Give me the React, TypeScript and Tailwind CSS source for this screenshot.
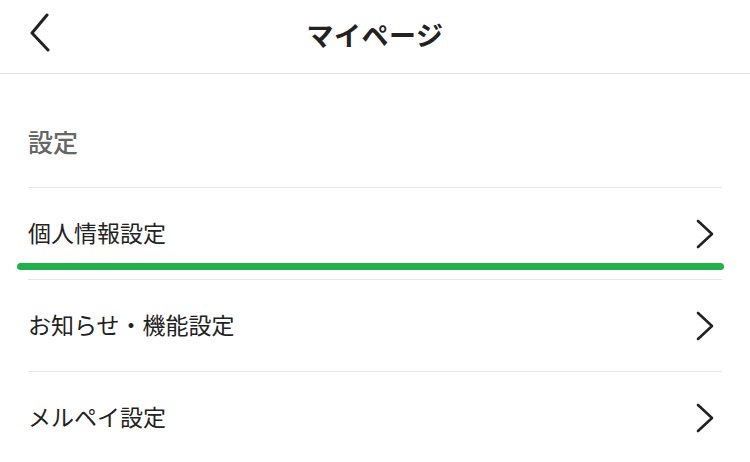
const rows = ["個人情報設定", "お知らせ・機能設定", "メルペイ設定"];

function BackArrow() {
  return (
    <svg width="24" height="40" viewBox="0 0 24 40" className="absolute left-[28px] top-[13px]" fill="none">
      <polyline points="19,2 4,20 20,37" stroke="#222" strokeWidth="3" strokeLinecap="round" strokeLinejoin="round" />
    </svg>
  );
}

function RowArrow() {
  return (
    <svg width="20" height="32" viewBox="0 0 20 32" fill="none" className="mr-[7px]">
      <polyline points="3,3 17,16 3,29" stroke="#222" strokeWidth="2.6" strokeLinecap="round" strokeLinejoin="round" />
    </svg>
  );
}

export default function App() {
  return (
    <div
      className="w-[750px] h-[462px] bg-white overflow-hidden text-[#222]"
      style={{ fontFamily: '"Noto Sans CJK JP", "Noto Sans", sans-serif' }}
    >
      {/* header */}
      <header className="relative h-[74px] flex items-center justify-center border-b border-[#e3e3e3]">
        <BackArrow />
        <h1 className="text-[27px] font-bold tracking-[0.5px] -mt-[2px]">マイページ</h1>
      </header>

      <main className="px-[28px]">
        <div className="h-[114px] flex items-center pt-[22px] border-b border-[#e6e6e6]">
          <h2 className="text-[25px] font-medium text-[#666]">設定</h2>
        </div>

        {rows.map((label, i) => (
          <div
            key={label}
            className="relative h-[92px] flex items-center justify-between border-b border-[#e6e6e6]"
          >
            <span className="text-[23px] -mt-[2px]">{label}</span>
            <RowArrow />
            {i === 0 && (
              <div className="absolute left-[-11px] right-[-2px] bottom-[9px] h-[7px] rounded-full bg-[#22b04b]" />
            )}
          </div>
        ))}
      </main>
    </div>
  );
}
